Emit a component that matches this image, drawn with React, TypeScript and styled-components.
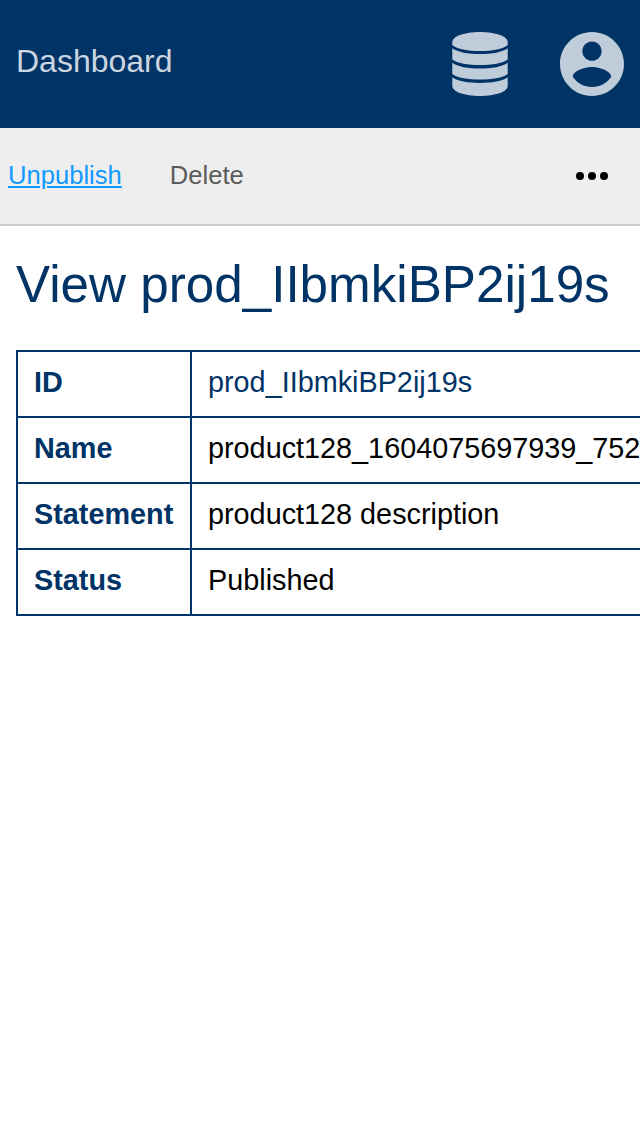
import React from "react";
import styled, { createGlobalStyle, css } from "styled-components";

const GlobalStyle = createGlobalStyle`
  * { box-sizing: border-box; }
  body {
    margin: 0;
    background: #fff;
    color: #000;
    font-family: "Liberation Sans", Arial, sans-serif;
    overflow: hidden;
  }
`;

const Page = styled.div`
  width: 100%;
  min-height: 100vh;
  overflow: hidden;
`;

const Header = styled.header`
  display: flex;
  align-items: center;
  height: 128px;
  padding: 0 16px;
  background: #003366;
  color: #bfccd9;
`;

const Brand = styled.a`
  margin-right: auto;
  padding-bottom: 6px;
  font-size: 32px;
  line-height: 36px;
  color: #ccd6e0;
`;

const NavIcons = styled.nav`
  display: flex;
  align-items: center;
  gap: 52px;
`;

const Icon = styled.svg`
  display: block;
  height: 64px;
  fill: currentColor;
`;

const Toolbar = styled.div`
  display: flex;
  align-items: center;
  height: 98px;
  padding: 0 32px 2px 8px;
  background: #eeeeee;
  border-bottom: 2px solid #cccccc;
`;

const Action = styled.a<{ $active?: boolean }>`
  margin-right: 48px;
  font-size: 25.6px;
  line-height: 30px;
  color: #5b5b5b;
  ${(p) => p.$active && css`
    color: #1199ff;
    text-decoration: underline;
    text-decoration-thickness: 2px;
    text-underline-offset: 2px;
  `}
`;

const More = styled.span`
  display: flex;
  gap: 4px;
  margin: 2px 0 0 auto;
`;

const Dot = styled.i`
  width: 8px;
  height: 8px;
  border-radius: 50%;
  background: #000;
`;

const Main = styled.main`
  padding: 30px 16px;
`;

const Title = styled.h1`
  margin: 0 0 37px;
  font-size: 51.2px;
  font-weight: 400;
  line-height: 57px;
  color: #003366;
  white-space: nowrap;
`;

const Table = styled.table`
  width: 720px;
  border-collapse: collapse;
  font-size: 28.8px;
  line-height: 32px;
`;

const cell = css`
  height: 66px;
  padding: 0 16px 4px;
  border: 2px solid #003366;
  text-align: left;
  white-space: nowrap;
`;

const Label = styled.th`
  ${cell}
  width: 174px;
  color: #003366;
`;

const Value = styled.td<{ $link?: boolean }>`
  ${cell}
  color: ${(p) => (p.$link ? "#003366" : "#000")};
`;

const rows = [
  { label: "ID", value: "prod_IIbmkiBP2ij19s", link: true },
  { label: "Name", value: "product128_1604075697939_752" },
  { label: "Statement", value: "product128 description" },
  { label: "Status", value: "Published" },
];

const DatabaseIcon = () => (
  <Icon width="56" viewBox="0 0 56 64" aria-hidden="true">
    <path d="M.3 10C.3 4.2 12.7 0 28 0s27.700 4.200 27.700 10v3C51 17 40 19 28 19S5 17 .3 13z" />
    <path d="M.3 16.200C5.500 20.200 16 22 28 22s22.500-1.800 27.700-5.800v11.200C51 31 40 33 28 33S5 31 .3 27.400z" />
    <path d="M.3 30.700C5.500 34.700 16 36.500 28 36.500s22.500-1.800 27.700-5.800v11.200C51 45.600 40 47.500 28 47.500S5 45.600.3 41.900z" />
    <path d="M.3 45.300C5.500 49.300 16 51 28 51s22.500-1.700 27.700-5.700V54C55.700 59.800 43.300 64 28 64S.3 59.800.3 54z" />
  </Icon>
);

const AccountIcon = () => (
  <Icon width="64" viewBox="2 2 20 20" aria-hidden="true">
    <path d="M12 2C6.480 2 2 6.480 2 12s4.480 10 10 10 10-4.480 10-10S17.520 2 12 2zm0 3c1.660 0 3 1.340 3 3s-1.340 3-3 3-3-1.340-3-3 1.340-3 3-3zm0 14.200c-2.500 0-4.710-1.280-6-3.220.03-1.990 4-3.080 6-3.080 1.990 0 5.970 1.090 6 3.080-1.290 1.940-3.500 3.220-6 3.220z" />
  </Icon>
);

export default function App() {
  return (
    <Page>
      <GlobalStyle />
      <Header>
        <Brand>Dashboard</Brand>
        <NavIcons>
          <DatabaseIcon />
          <AccountIcon />
        </NavIcons>
      </Header>
      <Toolbar>
        <Action $active>Unpublish</Action>
        <Action>Delete</Action>
        <More><Dot /><Dot /><Dot /></More>
      </Toolbar>
      <Main>
        <Title>View prod_IIbmkiBP2ij19s</Title>
        <Table>
          <tbody>
            {rows.map((r) => (
              <tr key={r.label}>
                <Label>{r.label}</Label>
                <Value $link={r.link}>{r.value}</Value>
              </tr>
            ))}
          </tbody>
        </Table>
      </Main>
    </Page>
  );
}
